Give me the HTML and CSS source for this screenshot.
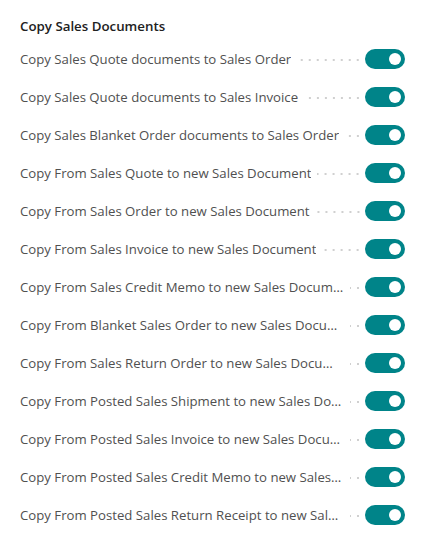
FILE: index.html
```html
<!DOCTYPE html>
<html>
<head>
<meta charset="utf-8">
<link rel="stylesheet" href="styles.css">
</head>
<body>
<section class="group">
  <h2 class="group-title">Copy Sales Documents</h2>
  <div class="row"><span class="label">Copy Sales Quote documents to Sales Order</span><span class="leader"></span><span class="toggle"><span class="knob"></span></span></div>
  <div class="row"><span class="label">Copy Sales Quote documents to Sales Invoice</span><span class="leader"></span><span class="toggle"><span class="knob"></span></span></div>
  <div class="row"><span class="label">Copy Sales Blanket Order documents to Sales Order</span><span class="leader"></span><span class="toggle"><span class="knob"></span></span></div>
  <div class="row"><span class="label">Copy From Sales Quote to new Sales Document</span><span class="leader"></span><span class="toggle"><span class="knob"></span></span></div>
  <div class="row"><span class="label">Copy From Sales Order to new Sales Document</span><span class="leader"></span><span class="toggle"><span class="knob"></span></span></div>
  <div class="row"><span class="label">Copy From Sales Invoice to new Sales Document</span><span class="leader"></span><span class="toggle"><span class="knob"></span></span></div>
  <div class="row"><span class="label">Copy From Sales Credit Memo to new Sales Document</span><span class="leader"></span><span class="toggle"><span class="knob"></span></span></div>
  <div class="row"><span class="label">Copy From Blanket Sales Order to new Sales Document</span><span class="leader"></span><span class="toggle"><span class="knob"></span></span></div>
  <div class="row"><span class="label">Copy From Sales Return Order to new Sales Document</span><span class="leader"></span><span class="toggle"><span class="knob"></span></span></div>
  <div class="row"><span class="label">Copy From Posted Sales Shipment to new Sales Document</span><span class="leader"></span><span class="toggle"><span class="knob"></span></span></div>
  <div class="row"><span class="label">Copy From Posted Sales Invoice to new Sales Document</span><span class="leader"></span><span class="toggle"><span class="knob"></span></span></div>
  <div class="row"><span class="label">Copy From Posted Sales Credit Memo to new Sales Document</span><span class="leader"></span><span class="toggle"><span class="knob"></span></span></div>
  <div class="row"><span class="label">Copy From Posted Sales Return Receipt to new Sales Document</span><span class="leader"></span><span class="toggle"><span class="knob"></span></span></div>
</section>
</body>
</html>
```

FILE: styles.css
```css
html, body {
  margin: 0;
  padding: 0;
  background: #ffffff;
}
body {
  font-family: "Open Sans", "Noto Sans", sans-serif;
  font-size: 13.2px;
  color: #505050;
}
.group {
  padding: 14px 0 0 20px;
  width: 385px;
}
.group-title {
  margin: 0 0 2px 0;
  font-size: 13.3px;
  font-weight: 600;
  color: #212121;
  line-height: 24px;
}
.row {
  display: flex;
  align-items: center;
  height: 38px;
}
.label {
  flex: 0 1 auto;
  max-width: 324px;
  white-space: nowrap;
  overflow: hidden;
  text-overflow: ellipsis;
  line-height: 20px;
}
.leader {
  flex: 1 1 0;
  height: 2px;
  margin-left: 6px;
  margin-right: 4px;
  margin-top: 2px;
  background-image: linear-gradient(to right, transparent 0, transparent 4px, #d0d0d0 4px, #d0d0d0 6px, transparent 6px);
  background-size: 8px 2px;
  background-position: right center;
  background-repeat: repeat-x;
}
.toggle {
  flex: 0 0 auto;
  width: 40px;
  height: 20px;
  border-radius: 10px;
  background: #008489;
  display: flex;
  align-items: center;
  justify-content: flex-end;
  padding-right: 4px;
  box-sizing: border-box;
}
.knob {
  width: 12px;
  height: 12px;
  border-radius: 50%;
  background: #ffffff;
}
```
